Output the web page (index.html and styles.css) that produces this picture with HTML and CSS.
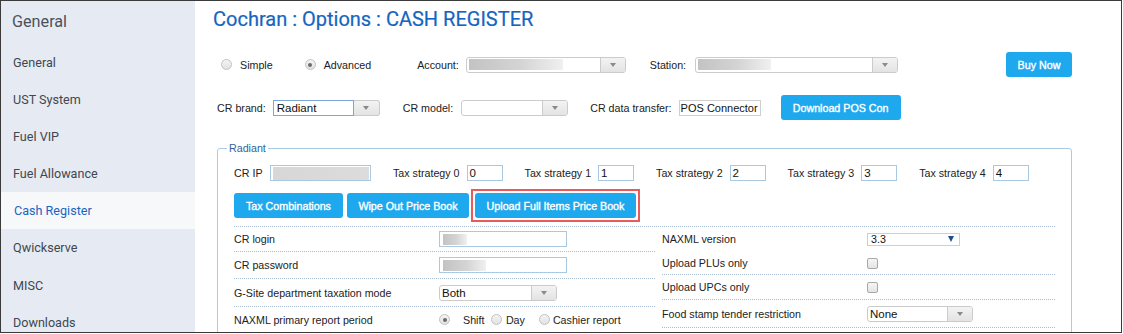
FILE: index.html
```html
<!DOCTYPE html>
<html lang="en">
<head>
    <meta charset="UTF-8">
    <title>Cochran : Options : CASH REGISTER</title>
    <link rel="stylesheet" href="styles.css">
</head>
<body>
    <div class="frame">
        <nav class="sidebar">
            <div class="side-head">General</div>
            <a class="side-item">General</a>
            <a class="side-item">UST System</a>
            <a class="side-item">Fuel VIP</a>
            <a class="side-item">Fuel Allowance</a>
            <a class="side-item active">Cash Register</a>
            <a class="side-item">Qwickserve</a>
            <a class="side-item">MISC</a>
            <a class="side-item">Downloads</a>
        </nav>

        <main class="main">
            <h1 class="title">Cochran : Options : CASH REGISTER</h1>

            <div class="bar bar-mode">
                <label class="opt"><span class="radio"></span>Simple</label>
                <label class="opt opt-adv"><span class="radio on"></span>Advanced</label>
                <span class="lbl lbl-account">Account:</span>
                <div class="combo combo-account">
                    <span class="combo-val"><span class="blur blur-account"></span></span>
                    <span class="combo-btn"></span>
                </div>
                <span class="lbl lbl-station">Station:</span>
                <div class="combo combo-station">
                    <span class="combo-val"><span class="blur blur-station"></span></span>
                    <span class="combo-btn"></span>
                </div>
                <button class="btn btn-buy">Buy Now</button>
            </div>

            <div class="bar bar-cr">
                <span class="lbl">CR brand:</span>
                <div class="combo combo-brand focus">
                    <span class="combo-val">Radiant</span>
                    <span class="combo-btn"></span>
                </div>
                <span class="lbl lbl-model">CR model:</span>
                <div class="combo combo-model">
                    <span class="combo-val"></span>
                    <span class="combo-btn"></span>
                </div>
                <span class="lbl lbl-transfer">CR data transfer:</span>
                <span class="field field-transfer">POS Connector</span>
                <button class="btn btn-download">Download POS Con</button>
            </div>

            <fieldset class="group">
                <legend>Radiant</legend>

                <div class="tax-row">
                    <span class="lbl">CR IP</span>
                    <span class="field field-ip"><span class="blur blur-ip"></span></span>
                    <span class="lbl lbl-tax">Tax strategy 0</span>
                    <span class="field field-tax">0</span>
                    <span class="lbl lbl-tax">Tax strategy 1</span>
                    <span class="field field-tax">1</span>
                    <span class="lbl lbl-tax">Tax strategy 2</span>
                    <span class="field field-tax">2</span>
                    <span class="lbl lbl-tax">Tax strategy 3</span>
                    <span class="field field-tax">3</span>
                    <span class="lbl lbl-tax">Tax strategy 4</span>
                    <span class="field field-tax">4</span>
                </div>

                <div class="actions">
                    <button class="btn btn-combos">Tax Combinations</button>
                    <button class="btn btn-wipe">Wipe Out Price Book</button>
                    <span class="highlight"><button class="btn btn-upload">Upload Full Items Price Book</button></span>
                </div>

                <div class="settings">
                    <div class="col">
                        <div class="set-row r1">
                            <span class="set-lbl">CR login</span>
                            <span class="field field-login"><span class="blur blur-login"></span></span>
                        </div>
                        <div class="set-row r2">
                            <span class="set-lbl">CR password</span>
                            <span class="field field-login"><span class="blur blur-pass"></span></span>
                        </div>
                        <div class="set-row r3">
                            <span class="set-lbl">G-Site department taxation mode</span>
                            <div class="combo combo-gsite">
                                <span class="combo-val">Both</span>
                                <span class="combo-btn"></span>
                            </div>
                        </div>
                        <div class="set-row r4">
                            <span class="set-lbl">NAXML primary report period</span>
                            <label class="opt opt-shift"><span class="radio on"></span>Shift</label>
                            <label class="opt opt-day"><span class="radio"></span>Day</label>
                            <label class="opt opt-cashier"><span class="radio"></span>Cashier report</label>
                        </div>
                    </div>
                    <div class="col">
                        <div class="set-row q1">
                            <span class="set-lbl">NAXML version</span>
                            <span class="plain-select">3.3<span class="plain-arrow"></span></span>
                        </div>
                        <div class="set-row q2">
                            <span class="set-lbl">Upload PLUs only</span>
                            <span class="check"></span>
                        </div>
                        <div class="set-row q3">
                            <span class="set-lbl">Upload UPCs only</span>
                            <span class="check"></span>
                        </div>
                        <div class="set-row q4">
                            <span class="set-lbl">Food stamp tender restriction</span>
                            <div class="combo combo-food">
                                <span class="combo-val">None</span>
                                <span class="combo-btn"></span>
                            </div>
                        </div>
                    </div>
                </div>
            </fieldset>
        </main>
    </div>
</body>
</html>
```

FILE: styles.css
```css
* {
    margin: 0;
    padding: 0;
    box-sizing: border-box;
}

body {
    background: white;
    font-family: "Liberation Sans", Arial, sans-serif;
    font-size: 10.7px;
    color: #222;
}

.frame {
    width: 1122px;
    height: 333px;
    border: 1px solid #3a3a3a;
    display: flex;
    overflow: hidden;
}

/* sidebar */

.sidebar {
    width: 194px;
    flex-shrink: 0;
    background: #e6ebf3;
    font-family: Roboto, "Liberation Sans", sans-serif;
}

.side-head {
    height: 43px;
    line-height: 41px;
    padding-left: 11px;
    font-size: 16.2px;
    color: #4a525c;
}

.side-item {
    display: block;
    height: 37.1px;
    line-height: 37px;
    padding-left: 12px;
    font-size: 12.6px;
    color: #3f4750;
}

.side-item.active {
    background: #f6f8fa;
    color: #1a64c4;
    padding-left: 13px;
}

/* main */

.main {
    flex: 1;
    padding: 5px 49px 0 22px;
    min-width: 0;
}

.title {
    margin-left: -4px;
    font-family: Roboto, "Liberation Sans", sans-serif;
    font-size: 20px;
    font-weight: 400;
    line-height: 26px;
    color: #1565c0;
    -webkit-text-stroke: 0.2px #1565c0;
}

.bar {
    display: flex;
    align-items: center;
}

.bar-mode {
    height: 25px;
    margin-top: 20px;
    padding-left: 4px;
}

.bar-cr {
    height: 25px;
    margin-top: 18px;
}

.lbl {
    white-space: nowrap;
    color: #222;
}

.opt {
    display: flex;
    align-items: center;
    color: #222;
}

.radio {
    width: 11px;
    height: 11px;
    margin-right: 8px;
    border: 1px solid #c2c2c2;
    border-radius: 50%;
    background: linear-gradient(#f4f4f4, #e2e2e2);
    display: flex;
    align-items: center;
    justify-content: center;
}

.radio.on::after {
    content: "";
    width: 4px;
    height: 4px;
    border-radius: 50%;
    background: #6b6b6b;
}

.opt-adv { margin-left: 32px; }
.lbl-account { margin-left: 46px; }
.lbl-station { margin-left: 24px; }
.lbl-model { margin-left: 23px; }
.lbl-transfer { margin-left: 22px; }

/* combo boxes */

.combo {
    display: flex;
    height: 16px;
    margin-left: 7px;
    border: 1px solid #cbcbcb;
    border-radius: 3px;
    background: white;
}

.combo-val {
    flex: 1;
    display: flex;
    align-items: center;
    padding-left: 2px;
    font-size: 11.5px;
    color: #111;
    overflow: hidden;
}

.combo-btn {
    width: 25px;
    border-left: 1px solid #cbcbcb;
    border-radius: 0 2px 2px 0;
    background: linear-gradient(#f3f3f3, #e3e3e3);
    display: flex;
    align-items: center;
    justify-content: center;
}

.combo-btn::after {
    content: "";
    border-left: 3px solid transparent;
    border-right: 3px solid transparent;
    border-top: 4px solid #8a8a8a;
}

.combo-account { width: 160px; }
.combo-station { width: 203px; margin-left: 9px; }
.combo-brand { width: 107px; }
.combo-model { width: 107px; margin-left: 8px; }

.combo.focus {
    border: none;
}

.combo.focus .combo-val {
    border: 1px solid #7ea6dc;
    padding-left: 3px;
}

.combo.focus .combo-btn {
    width: 26px;
    border: 1px solid #cbcbcb;
    border-left: none;
    border-radius: 0 3px 3px 0;
}

.blur {
    display: block;
    height: 11px;
    background: linear-gradient(to right, #c3c3c3, #d4d4d4 55%, #f0f0f0);
}

.blur-account { width: 94px; }
.blur-station { width: 73px; }

.field {
    display: flex;
    align-items: center;
    height: 16px;
    margin-left: 7px;
    padding-left: 2px;
    border: 1px solid #a9c9e3;
    background: white;
    font-size: 11.5px;
    color: #111;
    white-space: nowrap;
    overflow: hidden;
}

.field-transfer {
    width: 82px;
    margin-left: 7px;
    padding-left: 1px;
    border-color: #cfcfcf;
    font-size: 11px;
}

/* buttons */

.btn {
    height: 25px;
    border: none;
    border-radius: 3px;
    background: #1ea9ef;
    color: white;
    font-family: "Liberation Sans", Arial, sans-serif;
    font-size: 10.7px;
    -webkit-text-stroke: 0.35px white;
    white-space: nowrap;
    cursor: pointer;
}

.btn-buy {
    width: 66px;
    margin-left: auto;
}

.btn-download {
    width: 120px;
    margin-left: 20px;
}

/* radiant group */

.group {
    margin-top: 21px;
    padding: 6px 16px 0 16px;
    border: 1px solid #a8cbe6;
    border-radius: 3px;
    height: 200px;
}

.group legend {
    margin-left: -7px;
    padding: 0 2px;
    line-height: 14px;
    color: #2f6399;
}

.tax-row {
    display: flex;
    align-items: center;
    height: 24px;
}

.field-ip {
    width: 101px;
    margin-left: 7.5px;
}

.blur-ip {
    width: 96px;
    height: 13px;
    background: linear-gradient(to right, #d7d7d7, #dcdcdc);
}

.lbl-tax { margin-left: 22px; }

.field-tax {
    width: 36px;
}

.actions {
    display: flex;
    align-items: flex-start;
    height: 25px;
    margin-top: 8px;
}

.btn-combos { width: 109px; }
.btn-wipe { width: 122px; margin-left: 4px; }

.highlight {
    display: flex;
    margin: -4px 0 0 2px;
    padding: 2px;
    border: 2px solid #e85a5c;
}

.btn-upload {
    width: 161px;
}

.settings {
    display: grid;
    grid-template-columns: 421px 393px;
    column-gap: 7px;
    margin-top: 8px;
    border-top: 1px dotted #a7bccf;
}

.set-row {
    display: flex;
    align-items: center;
    border-bottom: 1px dotted #a7bccf;
}

.set-lbl {
    width: 205px;
    flex-shrink: 0;
    color: #222;
}

.r1 { height: 25px; }
.r2 { height: 27px; }
.r3 { height: 28px; }
.r4 { height: 26px; }

.q1 { height: 24px; border-bottom: none; }
.q2 { height: 24px; }
.q3 { height: 25px; }
.q4 { height: 28px; }

.field-login {
    width: 128px;
    margin-left: 0;
    padding-left: 3px;
}

.blur-login { width: 24px; }
.blur-pass { width: 43px; }

.combo-gsite {
    width: 118px;
    margin-left: 0;
}

.combo-food {
    width: 106px;
    margin-left: 0;
}

.opt-shift .radio { margin-right: 13px; }
.opt-day { margin-left: 6.5px; }
.opt-day .radio { margin-right: 4px; }
.opt-cashier { margin-left: 14px; }
.opt-cashier .radio { margin-right: 3px; }

.plain-select {
    display: flex;
    align-items: center;
    justify-content: space-between;
    width: 93px;
    height: 13px;
    padding: 0 5px 0 3px;
    border: 1px solid #cfcfcf;
    font-size: 10.7px;
    color: #111;
}

.plain-arrow {
    border-left: 3.5px solid transparent;
    border-right: 3.5px solid transparent;
    border-top: 6px solid #1f4f8c;
}

.check {
    width: 11px;
    height: 11px;
    margin-top: 1px;
    border: 1px solid #a8a8a8;
    border-radius: 2px;
    background: linear-gradient(#f6f6f6, #e4e4e4);
}
```
